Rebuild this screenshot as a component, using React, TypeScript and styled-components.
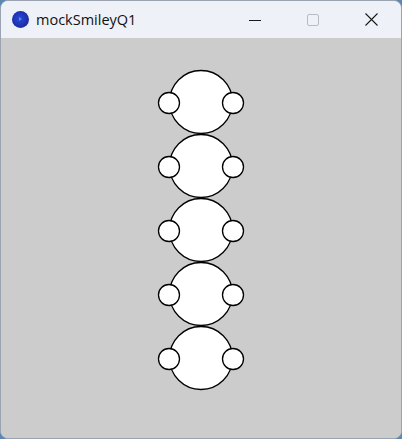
import React from "react";
import styled, { createGlobalStyle } from "styled-components";

const GlobalStyle = createGlobalStyle`
    html, body {
        margin: 0;
        padding: 0;
        background: #5d86b0;
    }
    body {
        font-family: "Open Sans", "Noto Sans", sans-serif;
    }
`;

const SMILEYS = [0, 1, 2, 3, 4];

const Smiley = () => (
    <SmileySvg width={90} height={66} viewBox="0 0 90 66">
        <circle cx={45} cy={33} r={31.5} fill="#fff" stroke="#000" strokeWidth={1.3} />
        <circle cx={13} cy={34} r={10.5} fill="#fff" stroke="#000" strokeWidth={1.3} />
        <circle cx={77} cy={34} r={10.5} fill="#fff" stroke="#000" strokeWidth={1.3} />
    </SmileySvg>
);

export default function App() {
    return (
        <>
            <GlobalStyle />
            <Window>
                <TitleBar>
                    <AppIcon />
                    <Title>mockSmileyQ1</Title>
                    <Controls>
                        <ControlButton>
                            <svg width={12} height={12} viewBox="0 0 12 12">
                                <line x1={0} y1={6.5} x2={12} y2={6.5} stroke="#1a1a1a" strokeWidth={1} />
                            </svg>
                        </ControlButton>
                        <ControlButton>
                            <svg width={12} height={12} viewBox="0 0 12 12">
                                <rect x={0.5} y={0.5} width={11} height={11} rx={1.5} fill="none" stroke="#b8bcc2" strokeWidth={1} />
                            </svg>
                        </ControlButton>
                        <ControlButton>
                            <svg width={13} height={13} viewBox="0 0 13 13">
                                <path d="M0.5 0.5 L12.5 12.5 M12.5 0.5 L0.5 12.5" stroke="#1a1a1a" strokeWidth={1.1} />
                            </svg>
                        </ControlButton>
                    </Controls>
                </TitleBar>
                <Canvas>
                    {SMILEYS.map((i) => (
                        <Smiley key={i} />
                    ))}
                </Canvas>
            </Window>
        </>
    );
}

const Window = styled.div`
    width: 400px;
    height: 437px;
    border: 1px solid #9aa4b0;
    border-radius: 8px;
    overflow: hidden;
    display: flex;
    flex-direction: column;
    background: #cccccc;
`;

const TitleBar = styled.div`
    height: 37px;
    flex-shrink: 0;
    background: #eef2f8;
    display: flex;
    align-items: center;
    padding-left: 11px;
`;

const AppIcon = styled.div`
    width: 17px;
    height: 17px;
    border-radius: 50%;
    background: radial-gradient(circle at 45% 45%, #2a48d8 0%, #1e32b0 55%, #121c70 100%);
    position: relative;

    &::after {
        content: "";
        position: absolute;
        left: 7px;
        top: 6px;
        border-left: 3px solid #4f8cff;
        border-top: 2.5px solid transparent;
        border-bottom: 2.5px solid transparent;
    }
`;

const Title = styled.span`
    margin-left: 7px;
    font-size: 14.5px;
    color: #111;
`;

const Controls = styled.div`
    margin-left: auto;
    display: flex;
    height: 100%;
`;

const ControlButton = styled.div`
    width: 56px;
    height: 100%;
    display: flex;
    align-items: center;
    justify-content: center;
    margin-right: 2px;
`;

const Canvas = styled.div`
    flex: 1;
    display: flex;
    flex-direction: column;
    align-items: center;
    padding-top: 31px;
    background: #cccccc;
`;

const SmileySvg = styled.svg`
    display: block;
    margin-bottom: -2px;
    overflow: visible;
`;
